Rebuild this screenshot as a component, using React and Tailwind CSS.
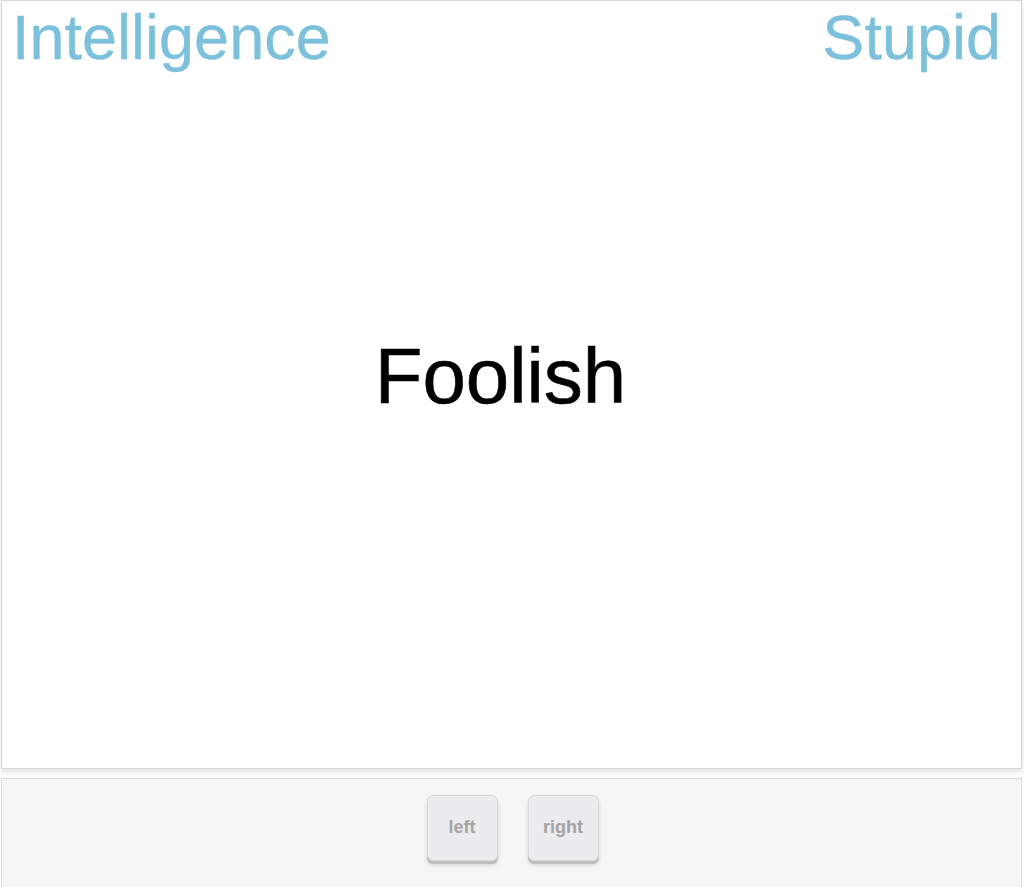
import React from "react";

const Key = ({ label }) => (
  <button className="w-[71px] h-[66px] rounded-[6px] bg-[#ececee] border border-[#d8d8d8] shadow-[0_3px_0_#bdbdbd,0_4px_4px_rgba(0,0,0,0.15)] text-[#a3a3a3] text-[18px] font-bold flex items-center justify-center pb-[2px]">
    {label}
  </button>
);

export default function App() {
  return (
    <div className="w-[1024px] h-[887px] bg-white flex flex-col font-['Liberation_Sans',Arial,sans-serif]">
      {/* card */}
      <div className="w-[1021px] ml-[1px] h-[769px] bg-white border border-[#d6d6d6] shadow-[0_3px_6px_rgba(0,0,0,0.12)] flex flex-col">
        <div className="flex justify-between items-start pl-[10px] pr-[20px] pt-[1px]">
          <span className="text-[63px] leading-[70px] text-[#7cc0dc] [-webkit-text-stroke:0.3px_#7cc0dc]">Intelligence</span>
          <span className="text-[63px] leading-[70px] text-[#7cc0dc] [-webkit-text-stroke:0.3px_#7cc0dc]">Stupid</span>
        </div>
        <div className="flex-1 flex items-center justify-center pr-[22px] pb-[88px]">
          <span className="text-[78px] leading-none text-black [-webkit-text-stroke:0.6px_#000]">Foolish</span>
        </div>
      </div>
      {/* controls */}
      <div className="mt-[9px] w-[1021px] ml-[1px] flex-1 bg-[#f6f6f6] border-t border-x border-[#dcdcdc] flex justify-center items-start gap-[30px] pt-[16px] pl-[2px]">
        <Key label="left" />
        <Key label="right" />
      </div>
    </div>
  );
}
